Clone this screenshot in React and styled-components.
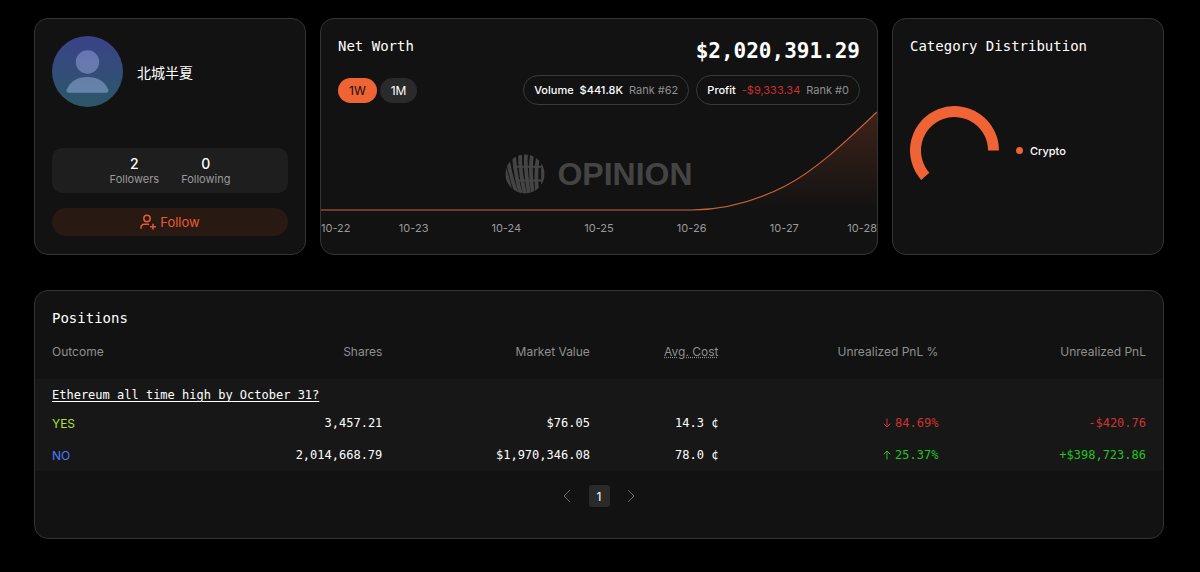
import React, { useState } from "react";
import styled, { createGlobalStyle } from "styled-components";

const dates = ["10-22", "10-23", "10-24", "10-25", "10-26", "10-27", "10-28"];

const columns = [
    { label: "Outcome", width: "14%" },
    { label: "Shares", width: "18.3%" },
    { label: "Market Value", width: "18.4%" },
    { label: "Avg. Cost", width: "11.4%", hint: true },
    { label: "Unrealized PnL %", width: "19.5%" },
    { label: "Unrealized PnL", width: "18.4%" },
];

const positions = [
    { outcome: "YES", shares: "3,457.21", value: "$76.05", cost: "14.3 ¢", percent: "84.69%", pnl: "-$420.76", up: false },
    { outcome: "NO", shares: "2,014,668.79", value: "$1,970,346.08", cost: "78.0 ¢", percent: "25.37%", pnl: "+$398,723.86", up: true },
];

function Avatar() {
    return (
        <svg width="71" height="71" viewBox="0 0 71 71" role="img" aria-label="avatar">
            <defs>
                <linearGradient id="avatarBg" x1="0" y1="0" x2="0" y2="1">
                    <stop offset="0" stopColor="#3a4389" />
                    <stop offset="1" stopColor="#2c5768" />
                </linearGradient>
                <linearGradient id="avatarFg" x1="0" y1="14" x2="0" y2="57" gradientUnits="userSpaceOnUse">
                    <stop offset="0" stopColor="#6974b5" />
                    <stop offset="1" stopColor="#6585a6" />
                </linearGradient>
            </defs>
            <circle cx="35.5" cy="35.5" r="35.5" fill="url(#avatarBg)" />
            <circle cx="35.5" cy="26" r="11.7" fill="url(#avatarFg)" />
            <path d="M35.5 41c10 0 17.500 4.500 20.800 12.500.6 1.700-.3 3.200-2.300 3.200H17c-2 0-2.900-1.500-2.300-3.200C18 45.500 25.500 41 35.500 41z" fill="url(#avatarFg)" />
        </svg>
    );
}

function FollowIcon() {
    return (
        <svg width="16" height="16" viewBox="0 0 16 16" fill="none" stroke="currentColor" strokeWidth="1.5" strokeLinecap="round" aria-hidden="true">
            <circle cx="7" cy="4.500" r="3.200" />
            <path d="M1 14.300v-1a3 3 0 0 1 3-3h4.500" />
            <path d="M13 10.300v4.800M10.600 12.700h4.800" />
        </svg>
    );
}

function OpinionMark() {
    return (
        <svg width="40" height="40" viewBox="0 0 40 40" fill="none" aria-hidden="true">
            <defs>
                <clipPath id="markClip">
                    <circle cx="20" cy="20" r="19.500" />
                </clipPath>
            </defs>
            <g clipPath="url(#markClip)" stroke="currentColor">
                <g strokeWidth="3.800">
                    <path d="M-1 12L6 38" />
                    <path d="M3 7C5 18 7 27 12 40" />
                    <path d="M9 2C10 15 12 28 16 40" />
                    <path d="M15 0C15 14 17 28 20 40" />
                    <path d="M21 0C20 14 22 28 24 40" />
                    <path d="M27 0C25 14 26 28 28 40" />
                    <path d="M33 3C31 14 31 26 32 37" />
                    <path d="M38 10V30" />
                </g>
                <path d="M8 12.700H36M12 26.500H38" strokeWidth="2" />
            </g>
        </svg>
    );
}

function NetWorthChart() {
    return (
        <ChartSvg viewBox="0 0 556 98" preserveAspectRatio="none" role="img" aria-label="Net worth over time">
            <defs>
                <linearGradient id="netFill" x1="0" y1="0" x2="0" y2="1">
                    <stop offset="0" stopColor="#ef6334" stopOpacity="0.2" />
                    <stop offset="1" stopColor="#ef6334" stopOpacity="0" />
                </linearGradient>
            </defs>
            <path d="M0 98H370.700C401.600 98 432.400 90.200 463.300 74.500C494.200 58.800 525.100 29.400 556 0V98z" fill="url(#netFill)" />
            <path
                d="M0 98H370.700C401.600 98 432.400 90.200 463.300 74.500C494.200 58.800 525.100 29.400 556 0"
                fill="none"
                stroke="#cb623b"
                strokeWidth="1.2"
                vectorEffect="non-scaling-stroke"
            />
        </ChartSvg>
    );
}

export default function App() {
    const [range, setRange] = useState("1W");

    return (
        <>
            <GlobalStyle />
            <Page>
                <Overview>
                    <ProfileCard>
                        <Person>
                            <Avatar />
                            <Name>北城半夏</Name>
                        </Person>
                        <Stats>
                            <Stat><strong>2</strong><span>Followers</span></Stat>
                            <Stat><strong>0</strong><span>Following</span></Stat>
                        </Stats>
                        <FollowButton type="button"><FollowIcon />Follow</FollowButton>
                    </ProfileCard>

                    <NetCard>
                        <NetHeader>
                            <Title>Net Worth</Title>
                            <Total>$2,020,391.29</Total>
                        </NetHeader>
                        <Controls>
                            <Ranges>
                                {["1W", "1M"].map((item) => (
                                    <RangeButton
                                        key={item}
                                        type="button"
                                        $active={range === item}
                                        aria-pressed={range === item}
                                        onClick={() => setRange(item)}
                                    >
                                        {item}
                                    </RangeButton>
                                ))}
                            </Ranges>
                            <Badges>
                                <Badge><b>Volume</b><b>$441.8K</b><Rank>Rank #62</Rank></Badge>
                                <Badge><b>Profit</b><Loss>-$9,333.34</Loss><Rank>Rank #0</Rank></Badge>
                            </Badges>
                        </Controls>
                        <Chart>
                            <Watermark><OpinionMark />OPINION</Watermark>
                            <NetWorthChart />
                        </Chart>
                        <Axis>
                            {dates.map((date) => <span key={date}>{date}</span>)}
                        </Axis>
                    </NetCard>

                    <CategoryCard>
                        <Title>Category Distribution</Title>
                        <Distribution>
                            <svg width="89" height="89" viewBox="0 0 89 89" role="img" aria-label="Crypto share">
                                <path d="M83.500 44.500A39 39 0 1 0 15.250 70.300" fill="none" stroke="#ef6334" strokeWidth="11" />
                            </svg>
                            <Legend>Crypto</Legend>
                        </Distribution>
                    </CategoryCard>
                </Overview>

                <PositionsCard>
                    <PositionsTitle>Positions</PositionsTitle>
                    <Table>
                        <thead>
                            <tr>
                                {columns.map(({ label, width, hint }) => (
                                    <HeadCell key={label} scope="col" $width={width}>
                                        {hint ? <Hint>{label}</Hint> : label}
                                    </HeadCell>
                                ))}
                            </tr>
                        </thead>
                        <tbody>
                            <tr>
                                <MarketCell colSpan={6}>
                                    <MarketLink href="#ethereum">Ethereum all time high by October 31?</MarketLink>
                                </MarketCell>
                            </tr>
                            {positions.map((row) => (
                                <tr key={row.outcome}>
                                    <OutcomeCell $yes={row.outcome === "YES"}>{row.outcome}</OutcomeCell>
                                    <Cell>{row.shares}</Cell>
                                    <Cell>{row.value}</Cell>
                                    <Cell>{row.cost}</Cell>
                                    <PnlCell $up={row.up}>
                                        <Trend>
                                            <svg width="8" height="10" viewBox="0 0 8 10" fill="none" stroke="currentColor" aria-hidden="true">
                                                <path d={row.up ? "M4 9.500V1M.7 4.300L4 1l3.300 3.300" : "M4 .5V9M.7 5.700L4 9l3.300-3.300"} />
                                            </svg>
                                            {row.percent}
                                        </Trend>
                                    </PnlCell>
                                    <PnlCell $up={row.up}>{row.pnl}</PnlCell>
                                </tr>
                            ))}
                        </tbody>
                    </Table>
                    <Pagination aria-label="Pagination">
                        <ArrowButton type="button" aria-label="Previous page">
                            <svg width="8" height="14" viewBox="0 0 8 14" fill="none" stroke="currentColor"><path d="M7 1L1 7l6 6" /></svg>
                        </ArrowButton>
                        <PageButton type="button" aria-current="page">1</PageButton>
                        <ArrowButton type="button" aria-label="Next page">
                            <svg width="8" height="14" viewBox="0 0 8 14" fill="none" stroke="currentColor"><path d="M1 1l6 6-6 6" /></svg>
                        </ArrowButton>
                    </Pagination>
                </PositionsCard>
            </Page>
        </>
    );
}

const mono = `"DejaVu Sans Mono", "Liberation Mono", monospace`;
const sans = `Inter, "Noto Sans CJK SC", sans-serif`;

const GlobalStyle = createGlobalStyle`
    * {
        box-sizing: border-box;
    }
    body {
        margin: 0;
        background: #000;
        color: #fff;
        font-family: ${sans};
        font-size: 12px;
    }
    button {
        border: none;
        padding: 0;
        font-family: inherit;
        cursor: pointer;
    }
    svg {
        display: block;
        flex: none;
    }
`;

const Page = styled.main`
    display: flex;
    flex-direction: column;
    gap: 35px;
    padding: 18px 36px 33px 34px;
`;

const Overview = styled.div`
    display: grid;
    grid-template-columns: repeat(4, minmax(0, 1fr));
    gap: 14px;
`;

const Card = styled.section`
    display: flex;
    flex-direction: column;
    min-height: 237px;
    background: #121212;
    border: 1px solid #343434;
    border-radius: 14px;
    overflow: hidden;
`;

const Title = styled.h2`
    margin: 0;
    font-family: ${mono};
    font-size: 14px;
    font-weight: 400;
    line-height: 20px;
`;

const ProfileCard = styled(Card)`
    padding: 17px 17px 18px;
`;

const Person = styled.div`
    display: flex;
    align-items: center;
    gap: 14px;
`;

const Name = styled.span`
    font-size: 14px;
`;

const Stats = styled.div`
    display: flex;
    justify-content: center;
    gap: 22px;
    margin-top: auto;
    padding: 8px 0 7px;
    background: #1e1e1e;
    border-radius: 10px;
`;

const Stat = styled.div`
    display: flex;
    flex-direction: column;
    align-items: center;
    color: #9a9a9a;
    font-size: 11px;
    line-height: 14px;
    strong {
        color: #fff;
        font-size: 14px;
        font-weight: 500;
        line-height: 16px;
    }
`;

const FollowButton = styled.button`
    display: flex;
    align-items: center;
    justify-content: center;
    gap: 4px;
    height: 28px;
    margin-top: 15px;
    border-radius: 14px;
    background: #291913;
    color: #e75b33;
    font-size: 13px;
`;

const NetCard = styled(Card)`
    grid-column: span 2;
`;

const NetHeader = styled.div`
    display: flex;
    justify-content: space-between;
    padding: 17px 17px 0;
`;

const Total = styled.div`
    padding-top: 1px;
    font-family: ${mono};
    font-size: 21px;
    font-weight: 700;
    line-height: 28px;
`;

const Controls = styled.div`
    display: flex;
    align-items: center;
    justify-content: space-between;
    margin-top: 10px;
    padding: 0 17px;
`;

const Ranges = styled.div`
    display: flex;
    gap: 3px;
`;

const RangeButton = styled.button`
    height: 25px;
    padding: 0 11px;
    border-radius: 13px;
    background: ${({ $active }) => ($active ? "#ef6334" : "#2a2a2a")};
    color: ${({ $active }) => ($active ? "#121212" : "#fff")};
    font-size: 12px;
`;

const Badges = styled.div`
    display: flex;
    gap: 7px;
`;

const Badge = styled.div`
    display: flex;
    align-items: center;
    gap: 6px;
    height: 30px;
    padding: 0 10px;
    border: 1px solid #3a3a3a;
    border-radius: 15px;
    font-size: 11px;
    b {
        font-weight: 500;
    }
`;

const Rank = styled.span`
    color: #8f8f8f;
`;

const Loss = styled.span`
    color: #c92f2f;
`;

const Chart = styled.div`
    position: relative;
    margin-top: 7px;
`;

const ChartSvg = styled.svg`
    position: relative;
    width: 100%;
    height: 98px;
    overflow: visible;
`;

const Watermark = styled.div`
    position: absolute;
    inset: 42px 0 auto;
    display: flex;
    align-items: center;
    justify-content: center;
    gap: 12px;
    height: 40px;
    color: #444;
    font-family: "Liberation Sans", sans-serif;
    font-size: 32px;
    font-weight: 700;
`;

const Axis = styled.div`
    display: grid;
    grid-template-columns: 1fr repeat(5, 2fr) 1fr;
    margin-top: 10px;
    color: #9a9a9a;
    font-size: 11px;
    line-height: 16px;
    text-align: center;
    span:first-child {
        text-align: left;
    }
    span:last-child {
        text-align: right;
    }
`;

const CategoryCard = styled(Card)`
    padding: 17px;
`;

const Distribution = styled.div`
    display: flex;
    align-items: center;
    gap: 17px;
    margin-top: 50px;
`;

const Legend = styled.span`
    display: flex;
    align-items: center;
    gap: 7px;
    font-size: 11px;
    font-weight: 500;
    &::before {
        content: "";
        width: 7px;
        height: 7px;
        border-radius: 50%;
        background: #ef6334;
    }
`;

const PositionsCard = styled(Card)`
    padding-bottom: 31px;
`;

const PositionsTitle = styled(Title)`
    padding: 17px 17px 0;
`;

const Table = styled.table`
    width: 100%;
    table-layout: fixed;
    border-collapse: collapse;
    tbody {
        background: #171717;
    }
`;

const Cell = styled.td`
    height: 32px;
    padding: 0 17px;
    font-family: ${mono};
    font-size: 12px;
    text-align: right;
    white-space: nowrap;
`;

const HeadCell = styled.th`
    width: ${({ $width }) => $width};
    padding: 14px 17px 17px;
    color: #8f8f8f;
    font-size: 12px;
    font-weight: 400;
    line-height: 20px;
    text-align: right;
    white-space: nowrap;
    &:first-child {
        text-align: left;
    }
`;

const Hint = styled.span`
    text-decoration: underline dotted;
`;

const MarketCell = styled(Cell)`
    height: 28px;
    padding-top: 4px;
    text-align: left;
`;

const MarketLink = styled.a`
    color: #fff;
    text-underline-offset: 2px;
`;

const OutcomeCell = styled(Cell)`
    color: ${({ $yes }) => ($yes ? "#b2e03c" : "#4a7dff")};
    font-family: ${sans};
    text-align: left;
`;

const PnlCell = styled(Cell)`
    color: ${({ $up }) => ($up ? "#1fc41f" : "#cf332f")};
`;

const Trend = styled.span`
    display: inline-flex;
    align-items: center;
    gap: 4px;
`;

const Pagination = styled.nav`
    display: flex;
    align-items: center;
    justify-content: center;
    gap: 11px;
    margin-top: 14px;
`;

const PageButton = styled.button`
    width: 21px;
    height: 22px;
    border-radius: 3px;
    background: #2a2a2a;
    color: #fff;
    font-size: 12px;
`;

const ArrowButton = styled.button`
    display: flex;
    align-items: center;
    justify-content: center;
    width: 21px;
    height: 22px;
    background: none;
    color: #666;
`;
